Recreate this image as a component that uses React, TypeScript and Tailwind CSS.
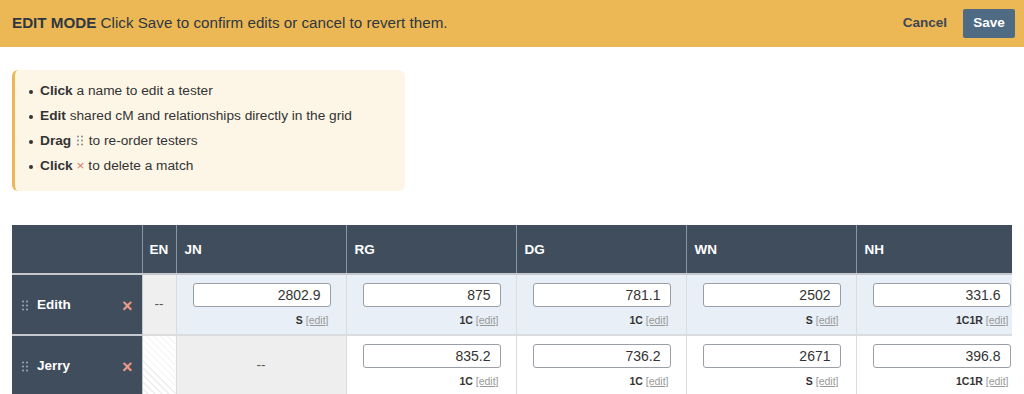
import { ReactNode } from "react";

type Cell = { value: string; rel: string } | null;

const cols = ["JN", "RG", "DG", "WN", "NH"];

const rows: { name: string; en: "dash" | "hatch"; cells: Cell[]; tint: boolean }[] = [
  {
    name: "Edith",
    en: "dash",
    tint: true,
    cells: [
      { value: "2802.9", rel: "S" },
      { value: "875", rel: "1C" },
      { value: "781.1", rel: "1C" },
      { value: "2502", rel: "S" },
      { value: "331.6", rel: "1C1R" },
    ],
  },
  {
    name: "Jerry",
    en: "hatch",
    tint: false,
    cells: [
      null,
      { value: "835.2", rel: "1C" },
      { value: "736.2", rel: "1C" },
      { value: "2671", rel: "S" },
      { value: "396.8", rel: "1C1R" },
    ],
  },
];

function Dots({ className }: { className?: string }) {
  return (
    <svg width="6" height="11" viewBox="0 0 6 11" className={className} fill="currentColor">
      <circle cx="1" cy="1.5" r="1" />
      <circle cx="5" cy="1.5" r="1" />
      <circle cx="1" cy="5.5" r="1" />
      <circle cx="5" cy="5.5" r="1" />
      <circle cx="1" cy="9.5" r="1" />
      <circle cx="5" cy="9.5" r="1" />
    </svg>
  );
}

function Bullet({ children }: { children: ReactNode }) {
  return (
    <li className="flex items-center gap-[7px] h-[25px]">
      <span className="h-[4px] w-[4px] rounded-full bg-[#333]" />
      <span>{children}</span>
    </li>
  );
}

export default function App() {
  return (
    <div className="min-h-screen bg-white font-['Liberation_Sans',Arial,sans-serif] text-[#333]">
      <div className="flex h-[47px] items-center justify-between bg-[#ecb856] pl-3 pr-[9px]">
        <div className="text-[15.2px] text-[#2f3740]">
          <span className="font-bold">EDIT MODE</span> Click Save to confirm edits or cancel to revert them.
        </div>
        <div className="flex items-center gap-4">
          <button className="text-[13.5px] font-bold text-[#3d4651]">Cancel</button>
          <button className="h-[29px] w-[52px] rounded-[2px] bg-[#4e6b83] text-[13.5px] font-bold text-white">
            Save
          </button>
        </div>
      </div>

      <div className="ml-3 mt-[23px] w-[393px] rounded-[6px] border-l-[3px] border-[#ecb856] bg-[#fdf6e6] pb-[12px] pl-[14px] pt-[9px] text-[13.7px] text-[#333]">
        <ul>
          <Bullet>
            <b>Click</b> a name to edit a tester
          </Bullet>
          <Bullet>
            <b>Edit</b> shared cM and relationships directly in the grid
          </Bullet>
          <Bullet>
            <b>Drag</b> <Dots className="mx-[2px] inline-block align-[-1px] text-[#888]" /> to re-order testers
          </Bullet>
          <Bullet>
            <b>Click</b> <span className="text-[#d9776a]">×</span> to delete a match
          </Bullet>
        </ul>
      </div>

      <div className="ml-3 mt-[34px] w-[1000px] overflow-hidden">
        <table className="w-[1014px] table-fixed border-collapse text-[13.5px]">
          <colgroup>
            <col className="w-[130px]" />
            <col className="w-[34px]" />
            {cols.map((c) => (
              <col key={c} className="w-[170px]" />
            ))}
          </colgroup>
          <thead>
            <tr className="h-[49px] bg-[#404d5d] text-white">
              <th className="border-b-2 border-r border-[#c5c9cd] border-r-[#8d959e]" />
              <th className="border-b-2 border-r border-[#c5c9cd] border-r-[#8d959e] pt-[2px] text-center font-bold">EN</th>
              {cols.map((c) => (
                <th
                  key={c}
                  className="border-b-2 border-r border-[#c5c9cd] border-r-[#8d959e] pl-[8px] pt-[2px] text-left font-bold"
                >
                  {c}
                </th>
              ))}
            </tr>
          </thead>
          <tbody>
            {rows.map((r) => (
              <tr key={r.name} className="h-[61px]">
                <td className="border-b-2 border-r border-[#c5c9cd] bg-[#404d5d] pl-[10px] pr-[9px] pt-[2px] text-white">
                  <div className="flex items-center">
                    <Dots className="text-[#a3abb4]" />
                    <span className="ml-[9px] flex-1 font-bold">{r.name}</span>
                    <span className="text-[18px] leading-none font-bold text-[#e89a88]">×</span>
                  </div>
                </td>
                {r.en === "dash" ? (
                  <td className="border-b-2 border-r border-[#dadcde] bg-[#efefef] text-center text-[#555]">--</td>
                ) : (
                  <td className="border-b-2 border-r border-[#dadcde] bg-[repeating-linear-gradient(45deg,#ffffff_0px,#ffffff_4px,#ececec_4px,#ececec_5px)]" />
                )}
                {r.cells.map((c, i) =>
                  c ? (
                    <td
                      key={i}
                      className={`border-b-2 border-r border-[#dadcde] pl-[16px] pr-[15px] align-top pt-[8px] ${
                        r.tint ? "bg-[#e8eff6]" : "bg-white"
                      }`}
                    >
                      <div className="flex h-[24px] items-center justify-end rounded-[3px] border border-[#9a9fa5] bg-white pr-[9px] text-[14px] text-[#333]">
                        {c.value}
                      </div>
                      <div className="mt-[7px] pr-[2px] text-right text-[10.5px] leading-[13px]">
                        <b className="text-[#333]">{c.rel}</b>{" "}
                        <span className="text-[#999] underline">[edit]</span>
                      </div>
                    </td>
                  ) : (
                    <td key={i} className="border-b-2 border-r border-[#dadcde] bg-[#eeeeee] text-center text-[#555]">
                      --
                    </td>
                  )
                )}
              </tr>
            ))}
          </tbody>
        </table>
      </div>
    </div>
  );
}
